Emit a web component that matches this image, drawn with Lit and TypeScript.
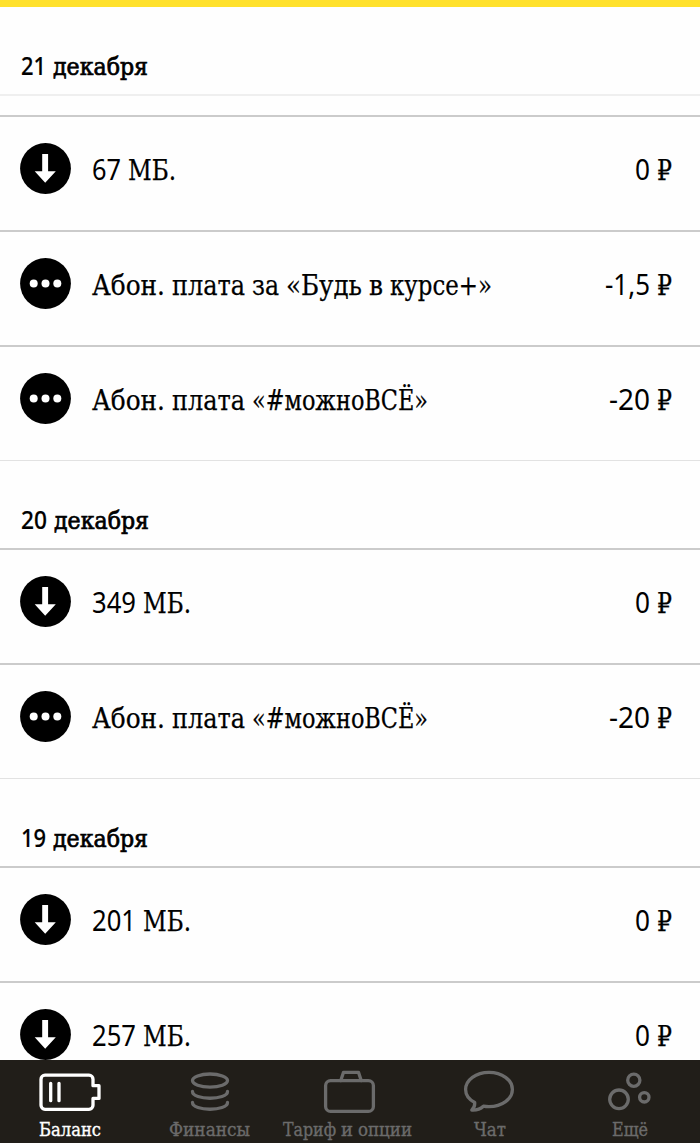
import { LitElement, html, svg, css } from "lit";
import { customElement, property } from "lit/decorators.js";

type Face = "serif" | "sans" | "head" | "headsans" | "tab";
type Word = [text: string, width: number, face?: Face];

const FACES: Record<Face, { height: number; base: number }> = {
  serif: { height: 36, base: 28 },
  sans: { height: 36, base: 28 },
  head: { height: 34, base: 26 },
  headsans: { height: 34, base: 26 },
  tab: { height: 26, base: 19 },
};

const words = (list: Word[], fallback: Face = "serif") =>
  list.map(([text, width, face = fallback]) => {
    const f = FACES[face];
    return html`<svg class="word ${face}" width=${width} height=${f.height}>
      <text y=${f.base} textLength=${width} lengthAdjust="spacingAndGlyphs">${text}</text>
    </svg>`;
  });

const typeStyles = css`
  .word { display: block; overflow: visible; flex: none; fill: currentColor; stroke: currentColor; }
  .serif { font: 28.5px "DejaVu Serif Condensed", "DejaVu Serif", serif; stroke-width: 0.25px; }
  .sans { font: 28.5px "Noto Sans", sans-serif; stroke-width: 0; }
  .head { font: 25px "DejaVu Serif Condensed", "DejaVu Serif", serif; stroke-width: 0.7px; }
  .headsans { font: 500 26px "Noto Sans", sans-serif; stroke-width: 0.2px; }
  .tab { font: 19px "DejaVu Serif Condensed", "DejaVu Serif", serif; stroke-width: 0.35px; }
`;

interface Entry { icon: "down" | "dots"; title: Word[]; amount: Word[]; }
interface Day { date: Word[]; entries: Entry[]; first?: boolean; }

const rub: Word = ["₽", 15];
const zero: Word[] = [["0", 15, "sans"], rub];
const minus20: Word[] = [["-20", 41, "sans"], rub];
const mb: Word = ["МБ.", 48];
const all: Entry = {
  icon: "dots",
  title: [["Абон.", 73], ["плата", 73], ["«#можноВСЁ»", 176]],
  amount: minus20,
};
const month: Word = ["декабря", 95];

const days: Day[] = [
  {
    first: true,
    date: [["21", 25, "headsans"], month],
    entries: [
      { icon: "down", title: [["67", 29, "sans"], mb], amount: zero },
      {
        icon: "dots",
        title: [["Абон.", 73], ["плата", 73], ["за", 27], ["«Будь", 76], ["в", 14], ["курсе+»", 102]],
        amount: [["-1,5", 45, "sans"], rub],
      },
      all,
    ],
  },
  {
    date: [["20", 26, "headsans"], month],
    entries: [{ icon: "down", title: [["349", 44, "sans"], mb], amount: zero }, all],
  },
  {
    date: [["19", 25, "headsans"], month],
    entries: [
      { icon: "down", title: [["201", 44, "sans"], mb], amount: zero },
      { icon: "down", title: [["257", 44, "sans"], mb], amount: zero },
    ],
  },
];

@customElement("history-row")
class HistoryRow extends LitElement {
  @property({ attribute: false }) entry!: Entry;
  static styles = [typeStyles, css`
    :host { display: flex; box-sizing: border-box; height: 115px; padding: 26px 28px 0 20px; border-top: 2px solid #cbcbcb; align-items: flex-start; }
    .icon { display: block; flex: none; width: 51px; height: 51px; }
    .title, .amount { display: flex; gap: 7px; padding-top: 9px; }
    .title { margin-left: 21px; flex: 1; }
  `];
  render() {
    const glyph = this.entry.icon === "down"
      ? svg`<path d="M22.2 11h5.900v17.300h7.700L25.200 39.700 14.700 28.300h7.500z" fill="#fff"/>`
      : svg`<g fill="#fff"><circle cx="13.7" cy="25.4" r="4"/><circle cx="25.5" cy="25.4" r="4"/><circle cx="37.3" cy="25.4" r="4"/></g>`;
    return html`
      <svg class="icon" viewBox="0 0 51 51"><circle cx="25.5" cy="25.5" r="25.4"/>${glyph}</svg>
      <div class="title">${words(this.entry.title)}</div>
      <div class="amount">${words(this.entry.amount)}</div>`;
  }
}

@customElement("tab-bar")
class TabBar extends LitElement {
  static styles = [typeStyles, css`
    :host { display: grid; grid-template-columns: repeat(5, 1fr); height: 83px; background: #211e19; color: #6b6b6b; }
    .item { display: flex; flex-direction: column; align-items: center; }
    .active { color: #fff; }
    .icon { display: block; width: 80px; height: 57px; fill: none; stroke: currentColor; stroke-width: 3.3; stroke-linecap: round; stroke-linejoin: round; }
    .label { display: flex; gap: 5px; padding-right: 1px; }
    .wide { padding-right: 6px; }
  `];
  render() {
    const tabs: { icon: unknown; label: Word[] }[] = [
      {
        icon: svg`<path d="M15 15.2h44a4 4 0 0 1 4 4v6.500h6v12.700H63V45.300a4 4 0 0 1-4 4H15a4 4 0 0 1-4-4V19.200a4 4 0 0 1 4-4zM20.700 23.300v17.400M29 23.300v17.400"/>`,
        label: [["Баланс", 62]],
      },
      {
        icon: svg`<ellipse cx="40" cy="20.6" rx="17.5" ry="6.6"/><path d="M22.500 31.500c0 9 35 9 35 0M22.500 42.500c0 9 35 9 35 0"/>`,
        label: [["Финансы", 81]],
      },
      {
        icon: svg`<rect x="15.6" y="20.6" width="47.8" height="30.8" rx="5"/><path d="M30.800 20.600l2.700-8.300h15l2.700 8.300"/>`,
        label: [["Тариф", 53], ["и", 12], ["опции", 54]],
      },
      {
        icon: svg`<path d="M39 12.300c13 0 23.400 7.600 23.400 17.200S52 46.700 39 46.700c-2 0-3.800-.1-5.600-.5-3.200 3-6.900 4.200-11.600 3.900 2.300-2 3.100-4.600 2.900-7.600C19 39.500 15.600 34.900 15.600 29.500c0-9.600 10.400-17.200 23.400-17.200z"/>`,
        label: [["Чат", 32]],
      },
      {
        icon: svg`<circle cx="29" cy="39.300" r="9.300"/><circle cx="43.800" cy="20.200" r="6.100"/><circle cx="54.300" cy="37.300" r="4.700"/>`,
        label: [["Ещё", 36]],
      },
    ];
    return tabs.map((t, i) => html`<div class="item ${i === 0 ? "active" : ""}">
      <svg class="icon" viewBox="0 0 80 57">${t.icon}</svg>
      <div class="label ${t.label.length > 1 ? "wide" : ""}">${words(t.label, "tab")}</div>
    </div>`);
  }
}

@customElement("app-root")
class AppRoot extends LitElement {
  static styles = [typeStyles, css`
    :host { display: flex; flex-direction: column; height: 1143px; background: #fefefe; color: #000; overflow: hidden; }
    .top { height: 7px; flex: none; background: #ffe12c; }
    .list { flex: 1; min-height: 0; overflow: hidden; }
    .date { display: flex; box-sizing: border-box; gap: 7px; height: 88px; padding: 42px 0 0 21px; border-top: 1px solid #e2e2e2; }
    .date.first { height: 89px; padding-top: 42px; border-top: 0; border-bottom: 2px solid #efefef; margin-bottom: 19px; }
    tab-bar { flex: none; }
  `];
  render() {
    return html`
      <div class="top"></div>
      <div class="list">
        ${days.map((d) => html`
          <div class="date ${d.first ? "first" : ""}">${words(d.date, "head")}</div>
          ${d.entries.map((e) => html`<history-row .entry=${e}></history-row>`)}`)}
      </div>
      <tab-bar></tab-bar>`;
  }
}
